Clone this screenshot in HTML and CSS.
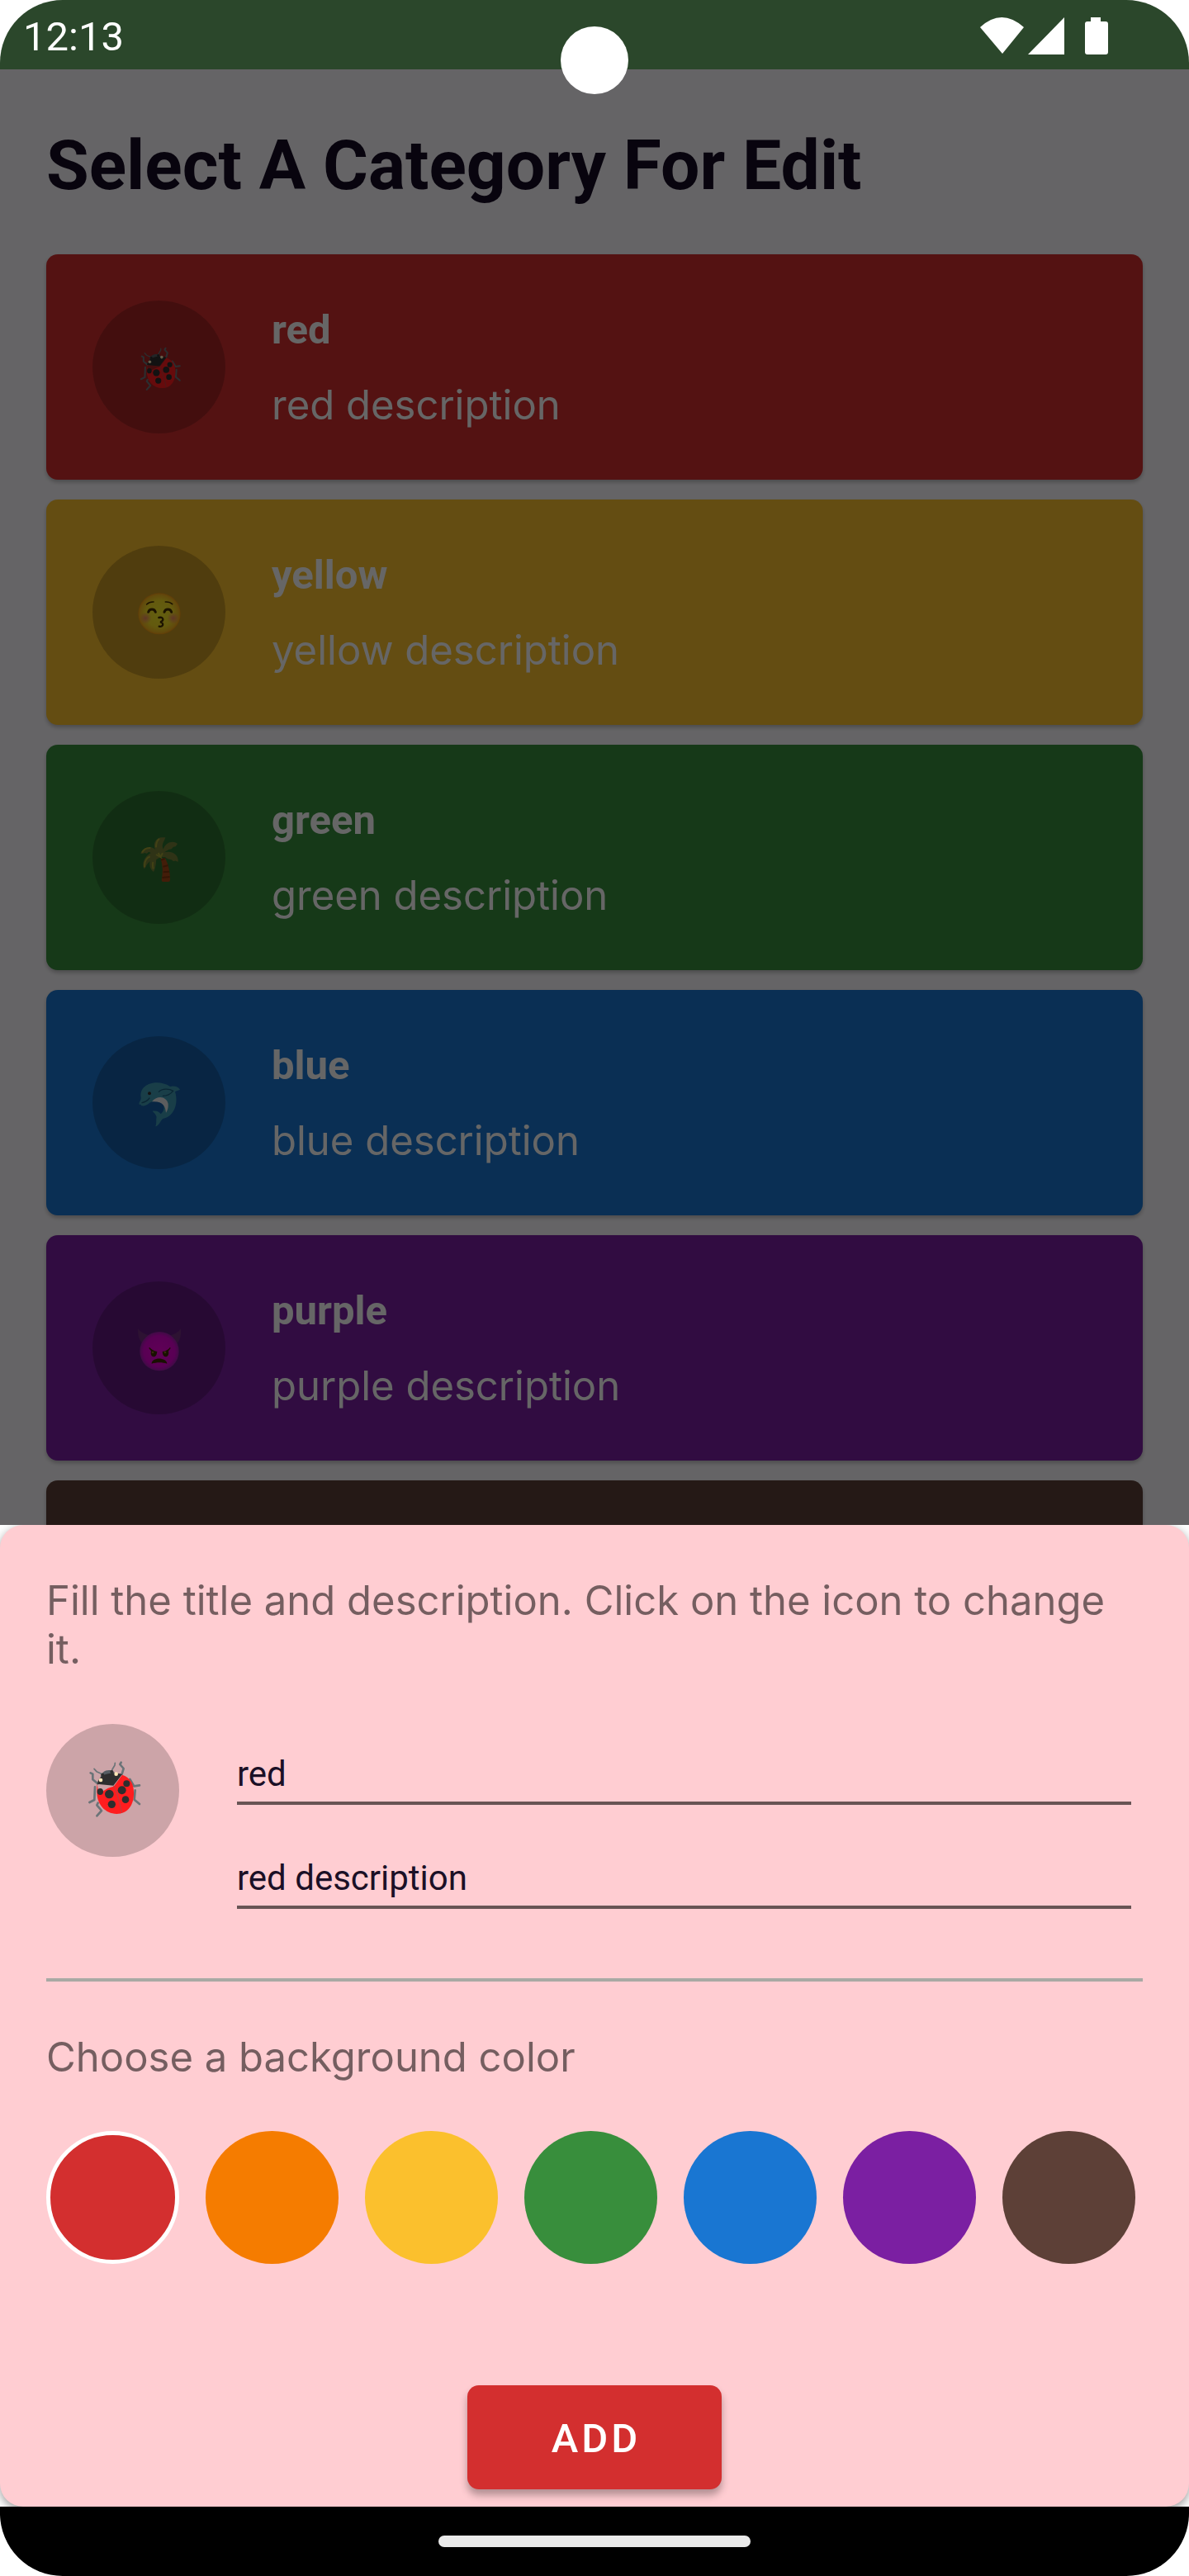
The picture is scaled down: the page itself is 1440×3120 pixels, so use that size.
FILE: index.html
```html
<!DOCTYPE html>
<html lang="en">
<head>
<meta charset="utf-8">
<meta name="viewport" content="width=device-width, initial-scale=1">
<title>Select A Category For Edit</title>
<link rel="stylesheet" href="styles.css">
</head>
<body>
<svg class="defs" aria-hidden="true">
  <defs>
    <g id="ladybug">
      <g fill="none" stroke="#6b7478" stroke-width="8" stroke-linecap="round" stroke-linejoin="round">
        <path d="M319 190l-4 7 13 15-6 20M208 228l8 4v20l18 15M386 273l-20 3-15-25M370 291l-3 34 19 16M224 279l-2 47-18 9M235 337l-4 8 17 20-17 19"/>
        <path d="M297 192l-1 8-9 15-2 8M221 213l9 10 22 10" stroke-width="5"/>
      </g>
      <path d="M244 247c0-36 54-38 54-10z" fill="#555d62"/>
      <path d="M232 267c8 65 8 20 60 10l31-42c28 9 42 32 42 62 2 48-22 80-62 80-42-1-72-34-72-80 0-12 0-20 1-30z" fill="#ff1d1f"/>
      <path d="M232 268c8-42 60-44 91-35l-32 41z" fill="#2e2e2e"/>
      <path d="M292 275c16 28 22 65 30 98" fill="none" stroke="#c43a3c" stroke-width="4"/>
      <g fill="#2e2e2e"><ellipse cx="243" cy="296" rx="11" ry="12"/><circle cx="276" cy="305" r="16"/><circle cx="285" cy="342" r="14"/><circle cx="322" cy="291" r="15"/><circle cx="339" cy="267" r="12"/><circle cx="335" cy="325" r="13"/><circle cx="252" cy="235" r="6"/><circle cx="285" cy="224" r="6"/></g>
      <g fill="#ffe8b8"><circle cx="245" cy="254" r="7"/><circle cx="301" cy="232" r="7"/></g>
    </g>
    <radialGradient id="faceFill"><stop offset="0" stop-color="#f9ee28"/><stop offset=".65" stop-color="#f7df25"/><stop offset=".92" stop-color="#f5b720"/><stop offset="1" stop-color="#f59a12"/></radialGradient>
    <radialGradient id="cheek"><stop offset="0" stop-color="#ee7470" stop-opacity=".8"/><stop offset="1" stop-color="#ee7470" stop-opacity="0"/></radialGradient>
    <radialGradient id="devilFill"><stop offset="0" stop-color="#f000d8"/><stop offset=".8" stop-color="#dd00d2"/><stop offset="1" stop-color="#a01cae"/></radialGradient>
  </defs>
</svg>
<div class="device">
  <header class="status-bar">
    <span>12:13</span>
    <span class="camera"></span>
    <svg class="status-icons" viewBox="0 0 156 46" role="img" aria-label="Wi-Fi, signal and battery">
      <path d="M0 12Q26-12 53 12L27 44Z M58 45L102 0V45Z M134 0h12v5h6q3 0 3 3v34q0 3-3 3h-22q-3 0-3-3V8q0-3 3-3h4Z"/>
    </svg>
  </header>

  <main class="screen">
    <h1 class="screen-title">Select A Category For Edit</h1>
    <ul class="cards">
      <li class="card red">
        <span class="avatar"><svg class="emoji emoji-small" viewBox="170 160 240 240"><use href="#ladybug"/></svg></span>
        <div class="card-text"><h2>red</h2><p>red description</p></div>
      </li>
      <li class="card yellow">
        <span class="avatar"><svg class="emoji" viewBox="187 184 240 240">
          <ellipse cx="307" cy="308" rx="77" ry="75" fill="url(#faceFill)"/>
          <circle cx="257" cy="324" r="22" fill="url(#cheek)"/><circle cx="357" cy="324" r="22" fill="url(#cheek)"/>
          <g fill="none" stroke="#483000" stroke-linecap="round"><path d="M261 274q10-10 25-9M329 265q16-1 25 8" stroke-width="5"/><path d="M267 302q3-10 13-10t13 10M325 302q3-10 13-10t13 10" stroke-width="9"/><path d="M305 322q16-3 15 8-2 7-10 8 12 3 9 12-4 6-13 4" stroke-width="7"/></g>
        </svg></span>
        <div class="card-text"><h2>yellow</h2><p>yellow description</p></div>
      </li>
      <li class="card green">
        <span class="avatar"><svg class="emoji" viewBox="187 190 240 240">
          <path d="M312 312q11 38 3 79 0 6 6 6h18q7 0 7-6 0-45-18-80z" fill="#a84a18"/>
          <path d="M313 318l14-5M320 342l19-5M321 362l22-2M317 382l28-3" stroke="#80380e" stroke-width="6"/>
          <path d="M316 236c-22 0-34 24-24 44-16-19-47-6-53 14 12 4 14-6 20 0 5 2 6-7 11-5l6 3c-24 14-33 38-25 57 8-2 8-14 14-19l8-8c-4 18 2 32 13 39 8-14 8-32 10-45l16-9 16 0c12 12 21 6 28 14 7 4 8-4 12 1l7 2c3-26-23-42-50-34l16-10 10-2 7-8 8-1 7-10c-17-14-43-5-52 20-8-18 3-27 8-43z" fill="#758039"/>
          <path d="M307 241q-12 8-12 31M244 291q9-18 31-17M253 344q-1-31 20-39M285 350q-4-12-1-25M295 298l16 9-8-15M311 307l8-14" fill="none" stroke="#a6a536" stroke-width="6"/>
        </svg></span>
        <div class="card-text"><h2>green</h2><p>green description</p></div>
      </li>
      <li class="card blue">
        <span class="avatar"><svg class="emoji" viewBox="187 181 240 240">
          <path d="M234 306c-3-10 8-13 6-27-7-48 60-68 106-38 12-4 29-1 36 11-7 4-11 3-18 8 15 50-9 92-43 97-12 8-12 24-28 29 5-14 1-23 4-34-3-12-8-13-15-22 13-3 25 2 30 11 12-8 17-28 5-42-10-10-24-10-34-4-17 6-22 18-38 16-4 0-5-3-5-5z" fill="#3f9cb4"/>
          <path d="M280 296c22-26 54-17 59 8 1 14-2 23-8 32-2-24-12-43-51-40z" fill="#e8e8ec"/>
          <path d="M305 260c12-13 38-12 52-3-10 12-20 18-37 18M244 300q17-4 27-17" fill="none" stroke="#1a5c80" stroke-width="4" stroke-linecap="round"/>
          <circle cx="271" cy="266" r="6" fill="#332e30"/>
        </svg></span>
        <div class="card-text"><h2>blue</h2><p>blue description</p></div>
      </li>
      <li class="card purple">
        <span class="avatar"><svg class="emoji" viewBox="187 187 240 240">
          <path d="M229 236q15 18 39 24l-22 32q-19-22-17-56zM385 236q-13 18-37 24l22 32q19-22 15-56z" fill="#702d7d"/>
          <circle cx="307" cy="318" r="71" fill="url(#devilFill)"/>
          <g fill="#402800"><path d="M271 303q9 12 28 16-2 20-14 19-12-3-8-21l-8-10zM346 303q-9 13-28 16 1 20 14 19 11-3 8-21l8-10zM279 363c-1-25 55-25 56 0-15-6-40-6-56 0z"/></g>
          <circle cx="283" cy="322" r="4" fill="#8b6c20"/><circle cx="328" cy="322" r="4" fill="#8b6c20"/>
        </svg></span>
        <div class="card-text"><h2>purple</h2><p>purple description</p></div>
      </li>
      <li class="card brown">
        <span class="avatar"></span>
      </li>
    </ul>
  </main>

  <div class="sheet-holder">
    <form class="sheet">
      <p class="hint">Fill the title and description. Click on the icon to change it.</p>
      <div class="editor">
        <button type="button" class="avatar" aria-label="Change icon"><svg class="emoji" viewBox="170 173 240 240"><use href="#ladybug"/></svg></button>
        <div class="fields">
          <input type="text" aria-label="Title" value="red">
          <input type="text" aria-label="Description" value="red description">
        </div>
      </div>
      <hr class="divider">
      <fieldset class="colors">
        <legend class="hint">Choose a background color</legend>
        <div class="swatches">
          <input type="radio" name="color" class="swatch red" aria-label="Red" checked>
          <input type="radio" name="color" class="swatch orange" aria-label="Orange">
          <input type="radio" name="color" class="swatch yellow" aria-label="Yellow">
          <input type="radio" name="color" class="swatch green" aria-label="Green">
          <input type="radio" name="color" class="swatch blue" aria-label="Blue">
          <input type="radio" name="color" class="swatch purple" aria-label="Purple">
          <input type="radio" name="color" class="swatch brown" aria-label="Brown">
        </div>
      </fieldset>
      <button type="submit" class="add red">ADD</button>
    </form>
  </div>

  <footer class="nav-bar"><span class="handle"></span></footer>
</div>
</body>
</html>
```
FILE: styles.css
```css
* {
  box-sizing: border-box;
  margin: 0;
  padding: 0;
}

body {
  background: #fff;
  font-family: Roboto, sans-serif;
  font-size: 49px;
}

.defs {
  position: absolute;
  width: 0;
  height: 0;
}

.device {
  display: flex;
  flex-direction: column;
  height: 100vh;
  overflow: hidden;
  border-radius: 76px;
}

.red { background: #d32f2f; }
.orange { background: #f57c00; }
.yellow { background: #fbc02d; }
.green { background: #388e3c; }
.blue { background: #1976d2; }
.purple { background: #7b1fa2; }
.brown { background: #5d4037; }

/* Status bar */
.status-bar {
  position: relative;
  z-index: 2;
  display: flex;
  flex: none;
  align-items: center;
  justify-content: space-between;
  height: 84px;
  padding: 4px 97px 0 28px;
  background: #2b472b;
  color: #fff;
}

.camera {
  position: absolute;
  top: 32px;
  left: 50%;
  width: 82px;
  height: 82px;
  margin-left: -41px;
  border-radius: 50%;
  background: #fff;
}

.status-icons {
  width: 156px;
  height: 46px;
  fill: #fff;
}

/* Category list, dimmed while the sheet is open */
.screen {
  position: relative;
  flex: 1;
  min-height: 0;
  overflow: hidden;
  padding: 66px 56px 0;
  background: #fdfbff;
}

.screen::after {
  content: "";
  position: absolute;
  inset: 0;
  background: rgba(0, 0, 0, 0.6);
}

.screen-title {
  margin-bottom: 56px;
  color: #160c24;
  font-size: 84px;
  font-weight: 700;
  line-height: 102px;
}

.cards {
  display: flex;
  flex-direction: column;
  gap: 24px;
  list-style: none;
}

.card {
  display: flex;
  align-items: center;
  gap: 56px;
  padding: 56px;
  border-radius: 14px;
  box-shadow: 0 3px 5px rgba(0, 0, 0, 0.25);
  color: #fff;
}

.card-text {
  display: flex;
  flex-direction: column;
  gap: 30px;
}

.card h2 {
  font-size: 49px;
  font-weight: 700;
  line-height: 62px;
}

.card p,
.hint {
  font-family: Inter, sans-serif;
  font-optical-sizing: none;
  font-weight: 400;
  line-height: 59px;
}

.avatar {
  display: flex;
  flex: none;
  align-items: center;
  justify-content: center;
  width: 161px;
  height: 161px;
  border: 0;
  border-radius: 50%;
  background: rgba(0, 0, 0, 0.2);
}

.emoji {
  width: 80px;
  height: 80px;
}

.emoji-small {
  width: 62px;
  height: 62px;
}

/* Bottom sheet */
.sheet-holder {
  flex: none;
  overflow: hidden;
  background: #fff;
}

.sheet {
  display: flex;
  flex-direction: column;
  padding: 62px 56px 21px;
  border-radius: 28px;
  background: #ffcdd2;
  box-shadow: 0 4px 12px rgba(0, 0, 0, 0.4);
}

.hint {
  color: rgba(0, 0, 0, 0.54);
}

.editor {
  display: flex;
  gap: 70px;
  margin-top: 61px;
}

.fields {
  display: flex;
  flex: 1;
  flex-direction: column;
  gap: 65px;
  padding: 37px 14px 0 0;
}

.fields input {
  width: 100%;
  height: 61px;
  padding-bottom: 10px;
  border: 0;
  border-bottom: 4px solid #685455;
  border-radius: 0;
  outline: 0;
  background: transparent;
  color: #1b1026;
  font: 400 42px/46px Roboto, sans-serif;
}

.divider {
  height: 4px;
  margin: 84px 0 62px;
  border: 0;
  background: #a9a9a4;
}

.colors {
  border: 0;
}

.swatches {
  display: flex;
  gap: 32px;
  margin-top: 60px;
}

.swatch {
  appearance: none;
  width: 161px;
  height: 161px;
  border-radius: 50%;
}

.swatch:checked {
  border: 5px solid #fff;
}

.add {
  align-self: center;
  width: 308px;
  height: 126px;
  margin-top: 147px;
  padding: 4px 0 0 4px;
  border: 0;
  border-radius: 14px;
  box-shadow: 0 7px 10px rgba(0, 0, 0, 0.3);
  color: #fff;
  font: 500 49px/58px Roboto, sans-serif;
  letter-spacing: 4px;
}

/* Gesture navigation */
.nav-bar {
  display: flex;
  flex: none;
  align-items: center;
  justify-content: center;
  height: 84px;
  background: #000;
}

.handle {
  width: 378px;
  height: 14px;
  border-radius: 7px;
  background: #eaeaea;
}
```
